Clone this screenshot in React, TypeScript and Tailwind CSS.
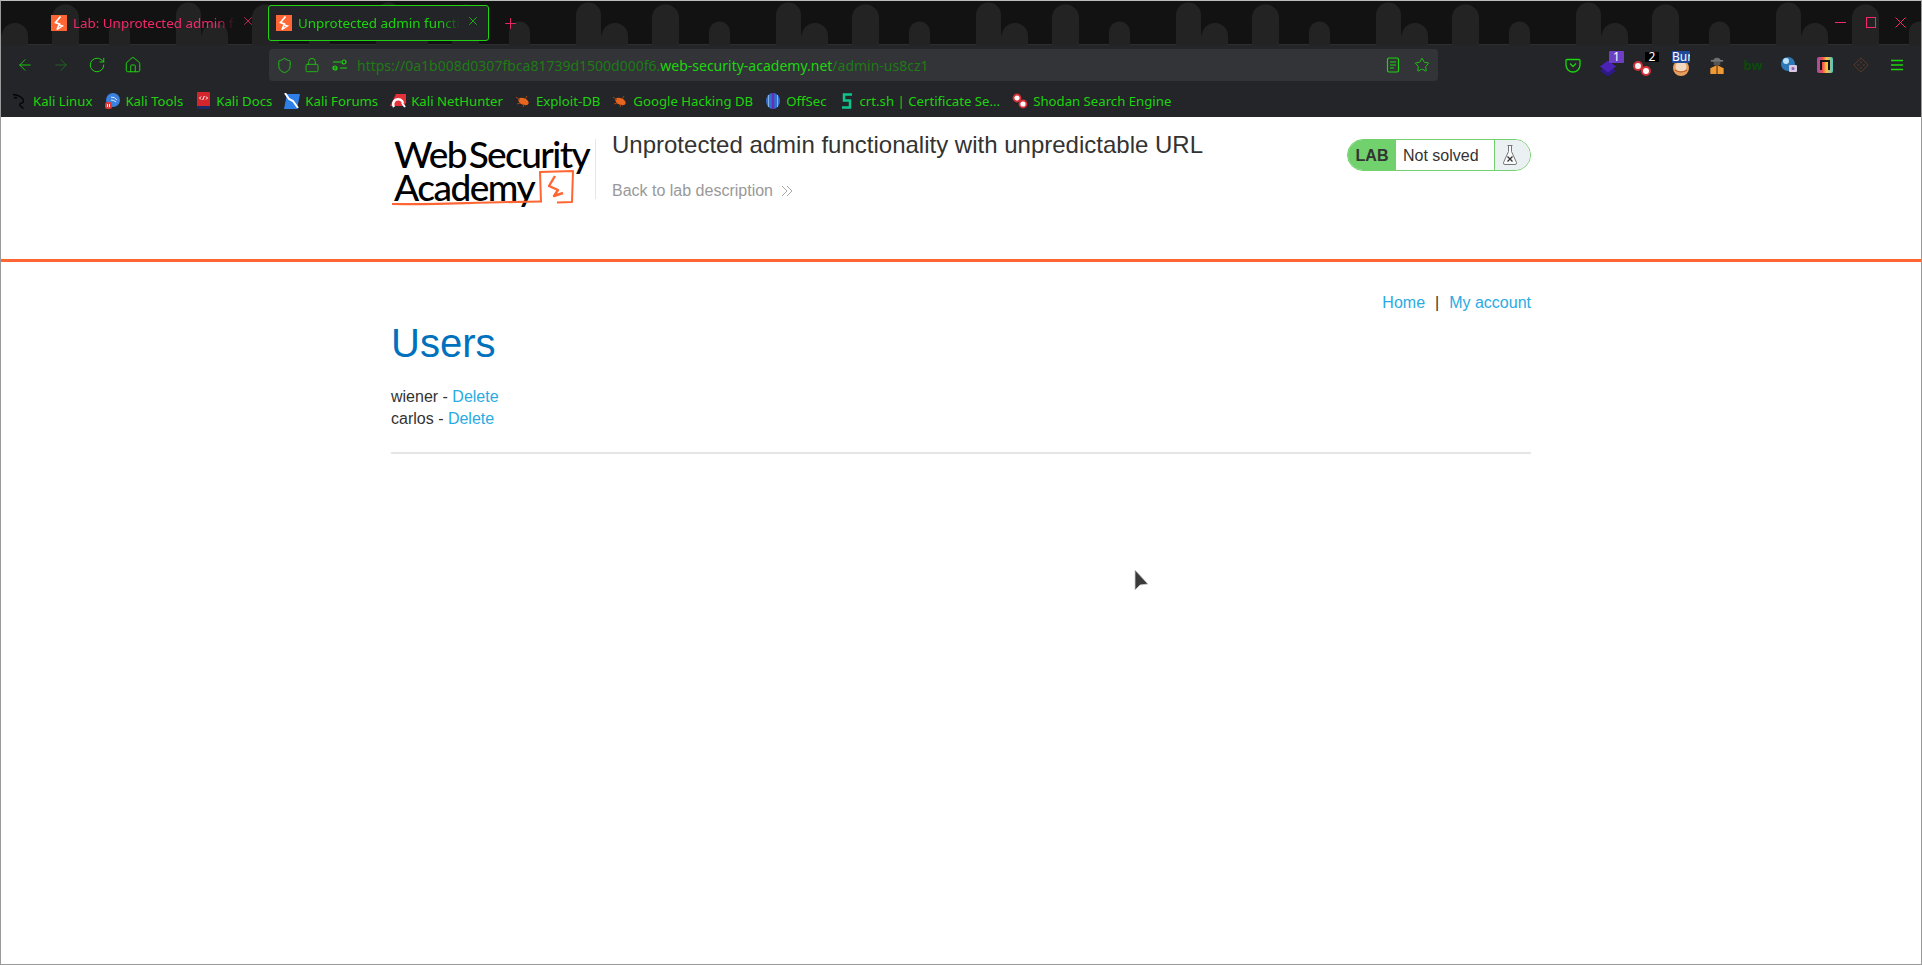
import React from "react";
import { ArrowLeft, ArrowRight, RotateCw, House, Shield, Lock, Star, X, Plus } from "lucide-react";

const G = "#1dd40e";
const PINK = "#f5286a";

function Bolt({ size = 16 }: { size?: number }) {
  return (
    <svg width={size} height={size} viewBox="0 0 16 16" className="shrink-0">
      <rect width="16" height="16" fill="#ff6633" />
      <path d="M9.500 1.500 4.500 7.500l4 1.500L6 14.500" fill="none" stroke="#fff" strokeWidth="1.700" />
      <path d="M6 14.500l5.500-3.500-3-1" fill="none" stroke="#fff" strokeWidth="1.400" />
    </svg>
  );
}

function Pillars() {
  return (
    <svg className="absolute inset-0" width="1922" height="44">
      <defs>
        <pattern id="pillars" x="0" y="0" width="200" height="44" patternUnits="userSpaceOnUse">
          <path d="M0 44V34a13 13 0 0 1 1-1v11zM1 44V35a13 13 0 0 1 26 0v9zM51 44V17a13.500 13.500 0 0 1 27 0v27zM108 44V31a10.500 10.500 0 0 1 21 0v13zM175 44V14a12.500 12.500 0 0 1 25 0v30z" fill="#232323" />
        </pattern>
      </defs>
      <rect width="1922" height="44" fill="url(#pillars)" />
    </svg>
  );
}

function Tab({ text, color, active, className }: { text: string; color: string; active?: boolean; className: string }) {
  return (
    <div className={`flex h-9 items-center gap-[6px] rounded-[3px] ${className} ${active ? "border border-[#1dd40e] bg-[#222427]" : ""}`} style={{ color }}>
      <Bolt />
      <span className="min-w-0 flex-1 overflow-hidden whitespace-nowrap pt-[1px] text-[13.4px] [font-family:'Noto_Sans',sans-serif] [mask-image:linear-gradient(to_right,black_88%,transparent)]">{text}</span>
      <X size={14} strokeWidth={1.300} className="-mt-1 shrink-0" />
    </div>
  );
}

function WindowControls() {
  return (
    <div className="relative ml-auto mr-[15px] flex items-center gap-[19px] pb-[1px]">
      <svg width="11" height="11" viewBox="0 0 11 11" stroke={PINK} shapeRendering="crispEdges"><path d="M0 5.500h11" /></svg>
      <svg width="11" height="11" viewBox="0 0 11 11" fill="none" stroke={PINK} shapeRendering="crispEdges"><rect x="1.500" y="0.500" width="9" height="10" /></svg>
      <svg width="11" height="11" viewBox="0 0 11 11" stroke={PINK}><path d="M.5.500l10 10M10.500.500l-10 10" /></svg>
    </div>
  );
}

function TabStrip() {
  return (
    <div className="relative flex h-[44px] items-center border-b border-[#2e2e2e] bg-[#121212] pl-[42px] pt-[1px]">
      <Pillars />
      <div className="relative flex items-center gap-[7px]">
        <Tab text="Lab: Unprotected admin functionality" color={PINK} className="w-[218px] pl-2 pr-[6px]" />
        <Tab text="Unprotected admin functionality" color={G} active className="w-[221px] pl-[7px] pr-2" />
        <Plus size={17} strokeWidth={1.300} color={PINK} className="ml-[6px]" />
      </div>
      <WindowControls />
    </div>
  );
}

function Perm() {
  return (
    <svg width="16" height="16" viewBox="0 0 16 16" fill="none" stroke={G} strokeWidth="1.200" className="shrink-0">
      <path d="M1 5h8M1 11h4M8 11h7" />
      <circle cx="12" cy="5" r="2" />
      <circle cx="3" cy="11" r="2" />
    </svg>
  );
}

function Reader() {
  return (
    <svg width="14" height="16" viewBox="0 0 14 16" fill="none" stroke={G} strokeWidth="1.200" className="shrink-0">
      <rect x="1.500" y="1" width="11" height="14" rx="1.500" />
      <path d="M4 5h6M4 8h6M4 11h4" />
    </svg>
  );
}

function Pocket() {
  return (
    <svg width="16" height="16" viewBox="0 0 16 16" fill="none" stroke={G} strokeWidth="1.300" className="shrink-0">
      <path d="M2 2.500h12a1 1 0 0 1 1 1V8a7 7 0 0 1-14 0V3.500a1 1 0 0 1 1-1z" />
      <path d="M5 6.500l3 3 3-3" />
    </svg>
  );
}

function ExtIcons() {
  const badge = "absolute text-[12px] leading-none text-white [font-family:'Noto_Sans',sans-serif] flex items-center justify-center";
  return (
    <div className="flex items-center">
      <span className="flex w-[37px] justify-center"><Pocket /></span>
      <span className="relative h-[28px] w-[36px]">
        <svg className="absolute left-[8px] top-[8px]" width="18" height="18" viewBox="0 0 18 18">
          <path d="M9 6l8 6-8 5.500L1 12z" fill="#2e1a86" />
          <path d="M9 1.500l8 6-8 6-8-6z" fill="#4a22b5" />
        </svg>
        <span className={`${badge} right-[3px] top-0 h-[12px] w-[15px] rounded-[1px] bg-[#6c3fc4]`}>1</span>
      </span>
      <span className="relative h-[28px] w-[36px]">
        <svg className="absolute left-[5px] top-[8px]" width="20" height="18" viewBox="0 0 20 18">
          <circle cx="6" cy="7" r="4" fill="#fff" stroke="#d8323a" strokeWidth="2" opacity="0.950" />
          <circle cx="14" cy="12" r="4" fill="#fff" stroke="#d8323a" strokeWidth="2" />
        </svg>
        <span className={`${badge} right-[4px] top-[1px] h-[10px] w-[14px] rounded-[1px] bg-black`}>2</span>
      </span>
      <span className="relative h-[28px] w-[36px]">
        <svg className="absolute left-[9px] top-[6px]" width="18" height="20" viewBox="0 0 18 20">
          <circle cx="9" cy="11" r="8" fill="#e8a060" />
          <circle cx="9" cy="10" r="5.500" fill="#f3d9c0" />
          <path d="M3 13q6 4 12 0" stroke="#c45a20" strokeWidth="1.500" fill="none" />
        </svg>
        <span className="absolute left-[9px] top-0 h-[12px] w-[18px] overflow-hidden rounded-[1px] bg-[#1f4a9c] text-[12px] leading-[12px] text-white [font-family:'Noto_Sans',sans-serif]">Bur</span>
      </span>
      <span className="flex w-[36px] justify-center">
        <svg width="16" height="20" viewBox="0 0 14 18">
          <path d="M3.500 6a3.500 3.500 0 0 1 7 0z" fill="#6f6f6f" />
          <rect x="1.500" y="4.500" width="11" height="1.500" fill="#777" />
          <rect x="4" y="6" width="6" height="3" fill="#555" />
          <path d="M1 17v-5l6-3 6 3v5z" fill="#f09a35" />
          <path d="M7 9v8" stroke="#5a3410" />
        </svg>
      </span>
      <span className="flex w-[36px] justify-center text-[13px] font-bold leading-none text-[#0c4a0a] [font-family:'Noto_Sans',sans-serif]">bw</span>
      <span className="flex w-[36px] justify-center">
        <svg width="18" height="18" viewBox="0 0 18 18">
          <circle cx="8" cy="8" r="7" fill="#2f78b8" />
          <circle cx="6" cy="5" r="3" fill="#bfe3f8" />
          <rect x="9" y="9" width="8" height="7" rx="1" fill="#d7c9e4" />
          <circle cx="13" cy="12.500" r="1.500" fill="#8e5fb0" />
        </svg>
      </span>
      <span className="flex w-[36px] justify-center">
        <svg width="16" height="16" viewBox="0 0 16 16">
          <defs>
            <linearGradient id="rb" x1="0" x2="1" y1="0" y2="0">
              <stop offset="0" stopColor="#9b4fb0" />
              <stop offset="0.350" stopColor="#ef4e4e" />
              <stop offset="0.600" stopColor="#f6c343" />
              <stop offset="1" stopColor="#4fc3c8" />
            </linearGradient>
          </defs>
          <rect width="16" height="16" rx="2" fill="url(#rb)" />
          <path d="M4 13V4h8v9" fill="none" stroke="#151515" strokeWidth="2" />
        </svg>
      </span>
      <span className="flex w-[36px] justify-center">
        <svg width="16" height="16" viewBox="0 0 16 16" fill="none" stroke="#5c3a2a" strokeWidth="1">
          <path d="M8 .800 15.200 8 8 15.200.800 8z" />
          <path d="M8 4v2.500M8 9.500V12M4 8h2.500M9.500 8H12" />
        </svg>
      </span>
      <span className="flex w-[36px] justify-center">
        <svg width="14" height="12" viewBox="0 0 14 12" stroke={G} strokeWidth="1.300">
          <path d="M1 1.500h12M1 6h12M1 10.500h12" />
        </svg>
      </span>
    </div>
  );
}

function NavBar() {
  return (
    <div className="flex h-10 items-center bg-[#232528] pl-[15px] pr-[6px]">
      <div className="flex items-center gap-[18px]" style={{ color: G }}>
        <ArrowLeft size={18} strokeWidth={1.200} />
        <ArrowRight size={18} strokeWidth={1.200} className="opacity-40" />
        <RotateCw size={18} strokeWidth={1.300} />
        <House size={18} strokeWidth={1.300} />
      </div>
      <div className="ml-[127px] flex h-8 w-[1169px] items-center rounded-[4px] bg-[#323438] pl-[7px] pr-[8px]" style={{ color: G }}>
        <Shield size={17} strokeWidth={1.200} className="shrink-0" />
        <Lock size={16} strokeWidth={1.200} className="ml-[11px] shrink-0" />
        <span className="ml-[12px]"><Perm /></span>
        <span className="ml-[9px] whitespace-nowrap text-[14px] [font-family:'Noto_Sans',sans-serif]">
          <span className="text-[#1f7a16]">https://0a1b008d0307fbca81739d1500d000f6.</span>
          web-security-academy.net
          <span className="text-[#1f7a16]">/admin-us8cz1</span>
        </span>
        <span className="ml-auto flex items-center gap-[14px]">
          <Reader />
          <Star size={16} strokeWidth={1.300} />
        </span>
      </div>
      <div className="ml-auto">
        <ExtIcons />
      </div>
    </div>
  );
}

function Bookmark({ label, icon }: { label: string; icon: React.ReactNode }) {
  return (
    <div className="flex items-center gap-[5px]">
      <span className="flex w-4 shrink-0 justify-center">{icon}</span>
      <span className="whitespace-nowrap pt-[1px] text-[13.2px]" style={{ color: G }}>{label}</span>
    </div>
  );
}

const Bug = () => (
  <svg width="16" height="16" viewBox="0 0 16 16">
    <ellipse cx="8.500" cy="8.500" rx="5.500" ry="3.300" transform="rotate(25 8.500 8.500)" fill="#e8641f" />
    <path d="M1 4l4 3M2 11l3-1M8 14l1-3M12 3l-2 3" stroke="#a34512" />
  </svg>
);

function Bookmarks() {
  return (
    <div className="flex h-8 items-center gap-[12px] bg-[#232528] pl-[11px] [font-family:'Noto_Sans',sans-serif]">
      <Bookmark label="Kali Linux" icon={
        <svg width="16" height="16" viewBox="0 0 16 16" fill="none" stroke="#050505" strokeWidth="1.400">
          <path d="M1 1.500c4 .5 7 1.500 9 3.500 2 2 2 4 0 5-2 .5-3 1.500-1.500 3l3 2.500M2 4.500l3 .5" />
        </svg>
      } />
      <Bookmark label="Kali Tools" icon={
        <svg width="16" height="16" viewBox="0 0 16 16">
          <circle cx="9" cy="7" r="7" fill="#3b82e0" />
          <path d="M7 4q4 0 6 3M7 7q3 0 5 2" stroke="#dbeafe" fill="none" />
          <rect x="1" y="9" width="7" height="7" rx="2.500" fill="#e03a3a" />
          <path d="M3.500 11v3M5.500 11v3" stroke="#fff" />
        </svg>
      } />
      <Bookmark label="Kali Docs" icon={
        <svg width="13" height="17" viewBox="0 0 13 17">
          <rect width="13" height="17" rx="1" fill="#d4242c" />
          <rect y="14" width="13" height="3" fill="#1e2a66" />
          <path d="M4 4.500 2.500 6 4 7.500M9 4.500 10.500 6 9 7.500M7.300 4 5.700 8" stroke="#fff" fill="none" />
        </svg>
      } />
      <Bookmark label="Kali Forums" icon={
        <svg width="16" height="16" viewBox="0 0 16 16">
          <path d="M3 1h13l-3 15H0z" fill="#2f7fe8" />
          <path d="M1 0l4 6 4 2 5 7" stroke="#fff" strokeWidth="2" fill="none" />
        </svg>
      } />
      <Bookmark label="Kali NetHunter" icon={
        <svg width="16" height="16" viewBox="0 0 16 16">
          <path d="M6 1h10v9l-3 3H0z" fill="#e5303a" />
          <path d="M4 14A5 5 0 1 1 13 10" stroke="#fff" strokeWidth="2.500" fill="none" />
          <path d="M12 10l3 4" stroke="#fff" strokeWidth="2" />
        </svg>
      } />
      <Bookmark label="Exploit-DB" icon={<Bug />} />
      <Bookmark label="Google Hacking DB" icon={<Bug />} />
      <Bookmark label="OffSec" icon={
        <svg width="16" height="16" viewBox="0 0 16 16">
          <ellipse cx="8" cy="8" rx="7" ry="8" fill="#2f6fd0" />
          <path d="M8 0v16" stroke="#6a2fb0" strokeWidth="2.500" />
          <path d="M3.500 2v12" stroke="#7fb3e8" />
          <path d="M12.500 2v12" stroke="#7fb3e8" />
        </svg>
      } />
      <Bookmark label="crt.sh | Certificate Se..." icon={
        <svg width="14" height="18" viewBox="0 0 14 18" fill="none" stroke="#10c48a" strokeWidth="2.500">
          <path d="M12 2.500H4v6h6v7H2" />
        </svg>
      } />
      <Bookmark label="Shodan Search Engine" icon={
        <svg width="16" height="16" viewBox="0 0 16 16">
          <circle cx="5" cy="5" r="3.500" fill="#fff" stroke="#d8323a" strokeWidth="1.800" />
          <circle cx="11" cy="11" r="3.500" fill="#fff" stroke="#d8323a" strokeWidth="1.800" />
        </svg>
      } />
    </div>
  );
}

function Logo() {
  return (
    <div className="relative h-[62px] w-[203px] font-medium text-black [font-family:Lato,sans-serif]">
      <div className="-mt-[2px] ml-[2px] whitespace-nowrap text-[37px] leading-[33px] tracking-[-1.6px] [word-spacing:-5px]">Web Security</div>
      <div className="ml-[2px] whitespace-nowrap text-[37px] leading-[33px] tracking-[-1.5px]">Academy</div>
      <svg className="absolute left-0 top-[-1px]" width="204" height="72" viewBox="0 0 204 72" fill="none" stroke="#ff6633" strokeLinejoin="round">
        <path d="M0 68c30 1 90-2 150-2.500" strokeWidth="2.200" />
        <path d="M149 66l-1-30 33-1-1 31-15 .5" strokeWidth="2" />
        <path d="M163 40l-6 10 9 4-4 6 9-3" strokeWidth="2.400" />
      </svg>
    </div>
  );
}

function Flask() {
  return (
    <svg width="16" height="22" viewBox="0 0 16 22" fill="none" stroke="#777" strokeWidth="1">
      <path d="M5.500 1.500h5M6.500 1.500v6L1.500 18.500q-.5 2 1.500 2h10q2 0 1.500-2L9.500 7.500v-6" fill="#f7f9fa" />
      <path d="M5.500 12.500l5 5M10.500 12.500l-5 5" stroke="#333" strokeWidth="1.300" />
    </svg>
  );
}

function LabHeader() {
  return (
    <div className="border-b-[3px] border-[#ff6633]">
      <div className="mx-auto flex h-[142px] w-[1140px] items-start pl-[1px] pt-[20px] text-[#333332]">
        <div className="mt-[2px] border-r border-[#e6e6e6]"><Logo /></div>
        <div className="ml-[16px] flex-1">
          <h2 className="mt-[-7px] text-[24px] leading-[30px]">Unprotected admin functionality with unpredictable URL</h2>
          <div className="mt-[20px] flex items-center gap-[8px] text-[16px] leading-[22px] text-[#999999]">
            Back to lab description
            <svg width="12" height="12" viewBox="0 0 12 12" fill="none" stroke="#aaa" strokeWidth="1"><path d="M1 1l5 5-5 5M6 1l5 5-5 5" /></svg>
          </div>
        </div>
        <div className="mt-[2px] flex h-8 w-[184px] overflow-hidden rounded-[16px] border border-[#70d16d]">
          <div className="flex w-[48px] items-center justify-center bg-[#70d16d] pt-[1px] text-[16px] font-bold text-[#333332]">LAB</div>
          <div className="flex w-[98px] items-center pl-[7px] pt-[1px] text-[16px] text-[#333332]">Not solved</div>
          <div className="flex flex-1 items-center justify-center border-l border-[#70d16d] bg-[#ebf0f2] pr-[6px]"><Flask /></div>
        </div>
      </div>
    </div>
  );
}

function Page() {
  return (
    <div className="mx-auto w-[1140px] text-[16px] leading-[22px] text-[#333332]">
      <div className="mt-[30px] flex justify-end text-[#29abe2]">
        <span>Home</span>
        <span className="mx-[10px] text-[#333332]">|</span>
        <span>My account</span>
      </div>
      <h1 className="mt-[5px] text-[40px] leading-[48px] text-[#0071bc]">Users</h1>
      <div className="mt-[19px]">
        <div>wiener - <span className="text-[#29abe2]">Delete</span></div>
        <div>carlos - <span className="text-[#29abe2]">Delete</span></div>
      </div>
      <div className="mt-[22px] h-[2px] bg-[#e6e6e6]" />
    </div>
  );
}

export default function App() {
  return (
    <div className="relative h-[965px] w-[1922px] overflow-hidden border border-t-[#bdbdbd] border-x-[#9a9a9a] border-b-[#9a9a9a] bg-white [font-family:'Liberation_Sans',Arial,sans-serif]">
      <TabStrip />
      <NavBar />
      <Bookmarks />
      <LabHeader />
      <Page />
      <svg className="absolute left-[1133px] top-[568px]" width="16" height="24" viewBox="0 0 16 24">
        <path d="M1 1v20l5-5 8-1z" fill="#3a3a3a" stroke="#cfcfcf" strokeWidth="0.800" />
      </svg>
    </div>
  );
}
